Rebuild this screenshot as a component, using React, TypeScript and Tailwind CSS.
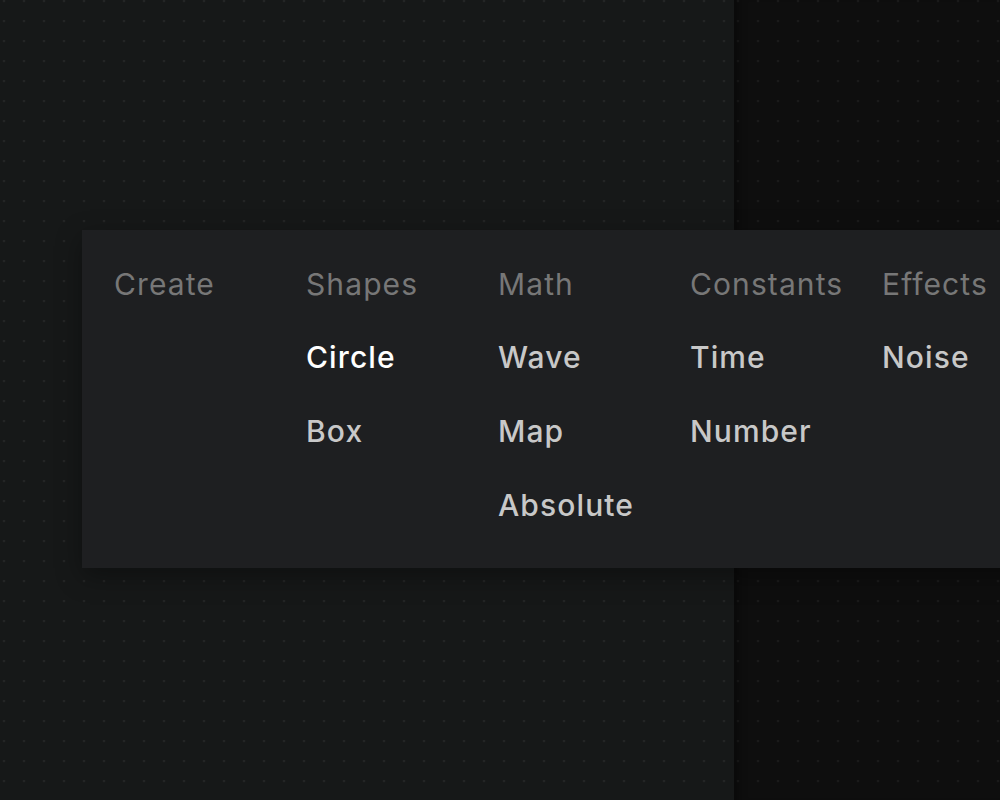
const columns = [
  { title: 'Create', items: [] as string[] },
  { title: 'Shapes', items: ['Circle', 'Box'] },
  { title: 'Math', items: ['Wave', 'Map', 'Absolute'] },
  { title: 'Constants', items: ['Time', 'Number'] },
  { title: 'Effects', items: ['Noise'] },
];

const App = () => {
  return (
    <div className="relative w-[1000px] h-[800px] overflow-hidden flex font-['Inter',sans-serif]">
      {/* Canvas backgrounds */}
      <div className="w-[734px] h-full bg-[#161818] bg-[radial-gradient(circle_at_4px_1px,#232525_1.5px,transparent_1.6px)] bg-[length:20px_20px]" />
      <div className="flex-1 h-full bg-[#0e0e0e] bg-[radial-gradient(circle_at_4px_1px,#1a1a1a_1.5px,transparent_1.6px)] bg-[length:20px_20px] shadow-[inset_12px_0_10px_-8px_rgba(0,0,0,0.35)]" />

      {/* Node menu */}
      <div className="absolute left-[82px] top-[230px] w-[1000px] bg-[#1e1f21] pl-8 pt-[17px] pb-[26px] flex shadow-[0_8px_24px_rgba(0,0,0,0.35)]">
        {columns.map((col) => (
          <div key={col.title} className="w-[192px] shrink-0 flex flex-col text-[30px] leading-[74px] tracking-[1.1px]">
            <div className="text-[#777777] h-[73px]">{col.title}</div>
            {col.items.map((item) => (
              <div
                key={item}
                className={item === 'Circle' ? 'text-white font-medium' : 'text-[#c8c8c8] font-medium'}
              >
                {item}
              </div>
            ))}
            {col.title === 'Create' && <div className="h-[222px]" />}
          </div>
        ))}
      </div>
    </div>
  );
};

export default App;
